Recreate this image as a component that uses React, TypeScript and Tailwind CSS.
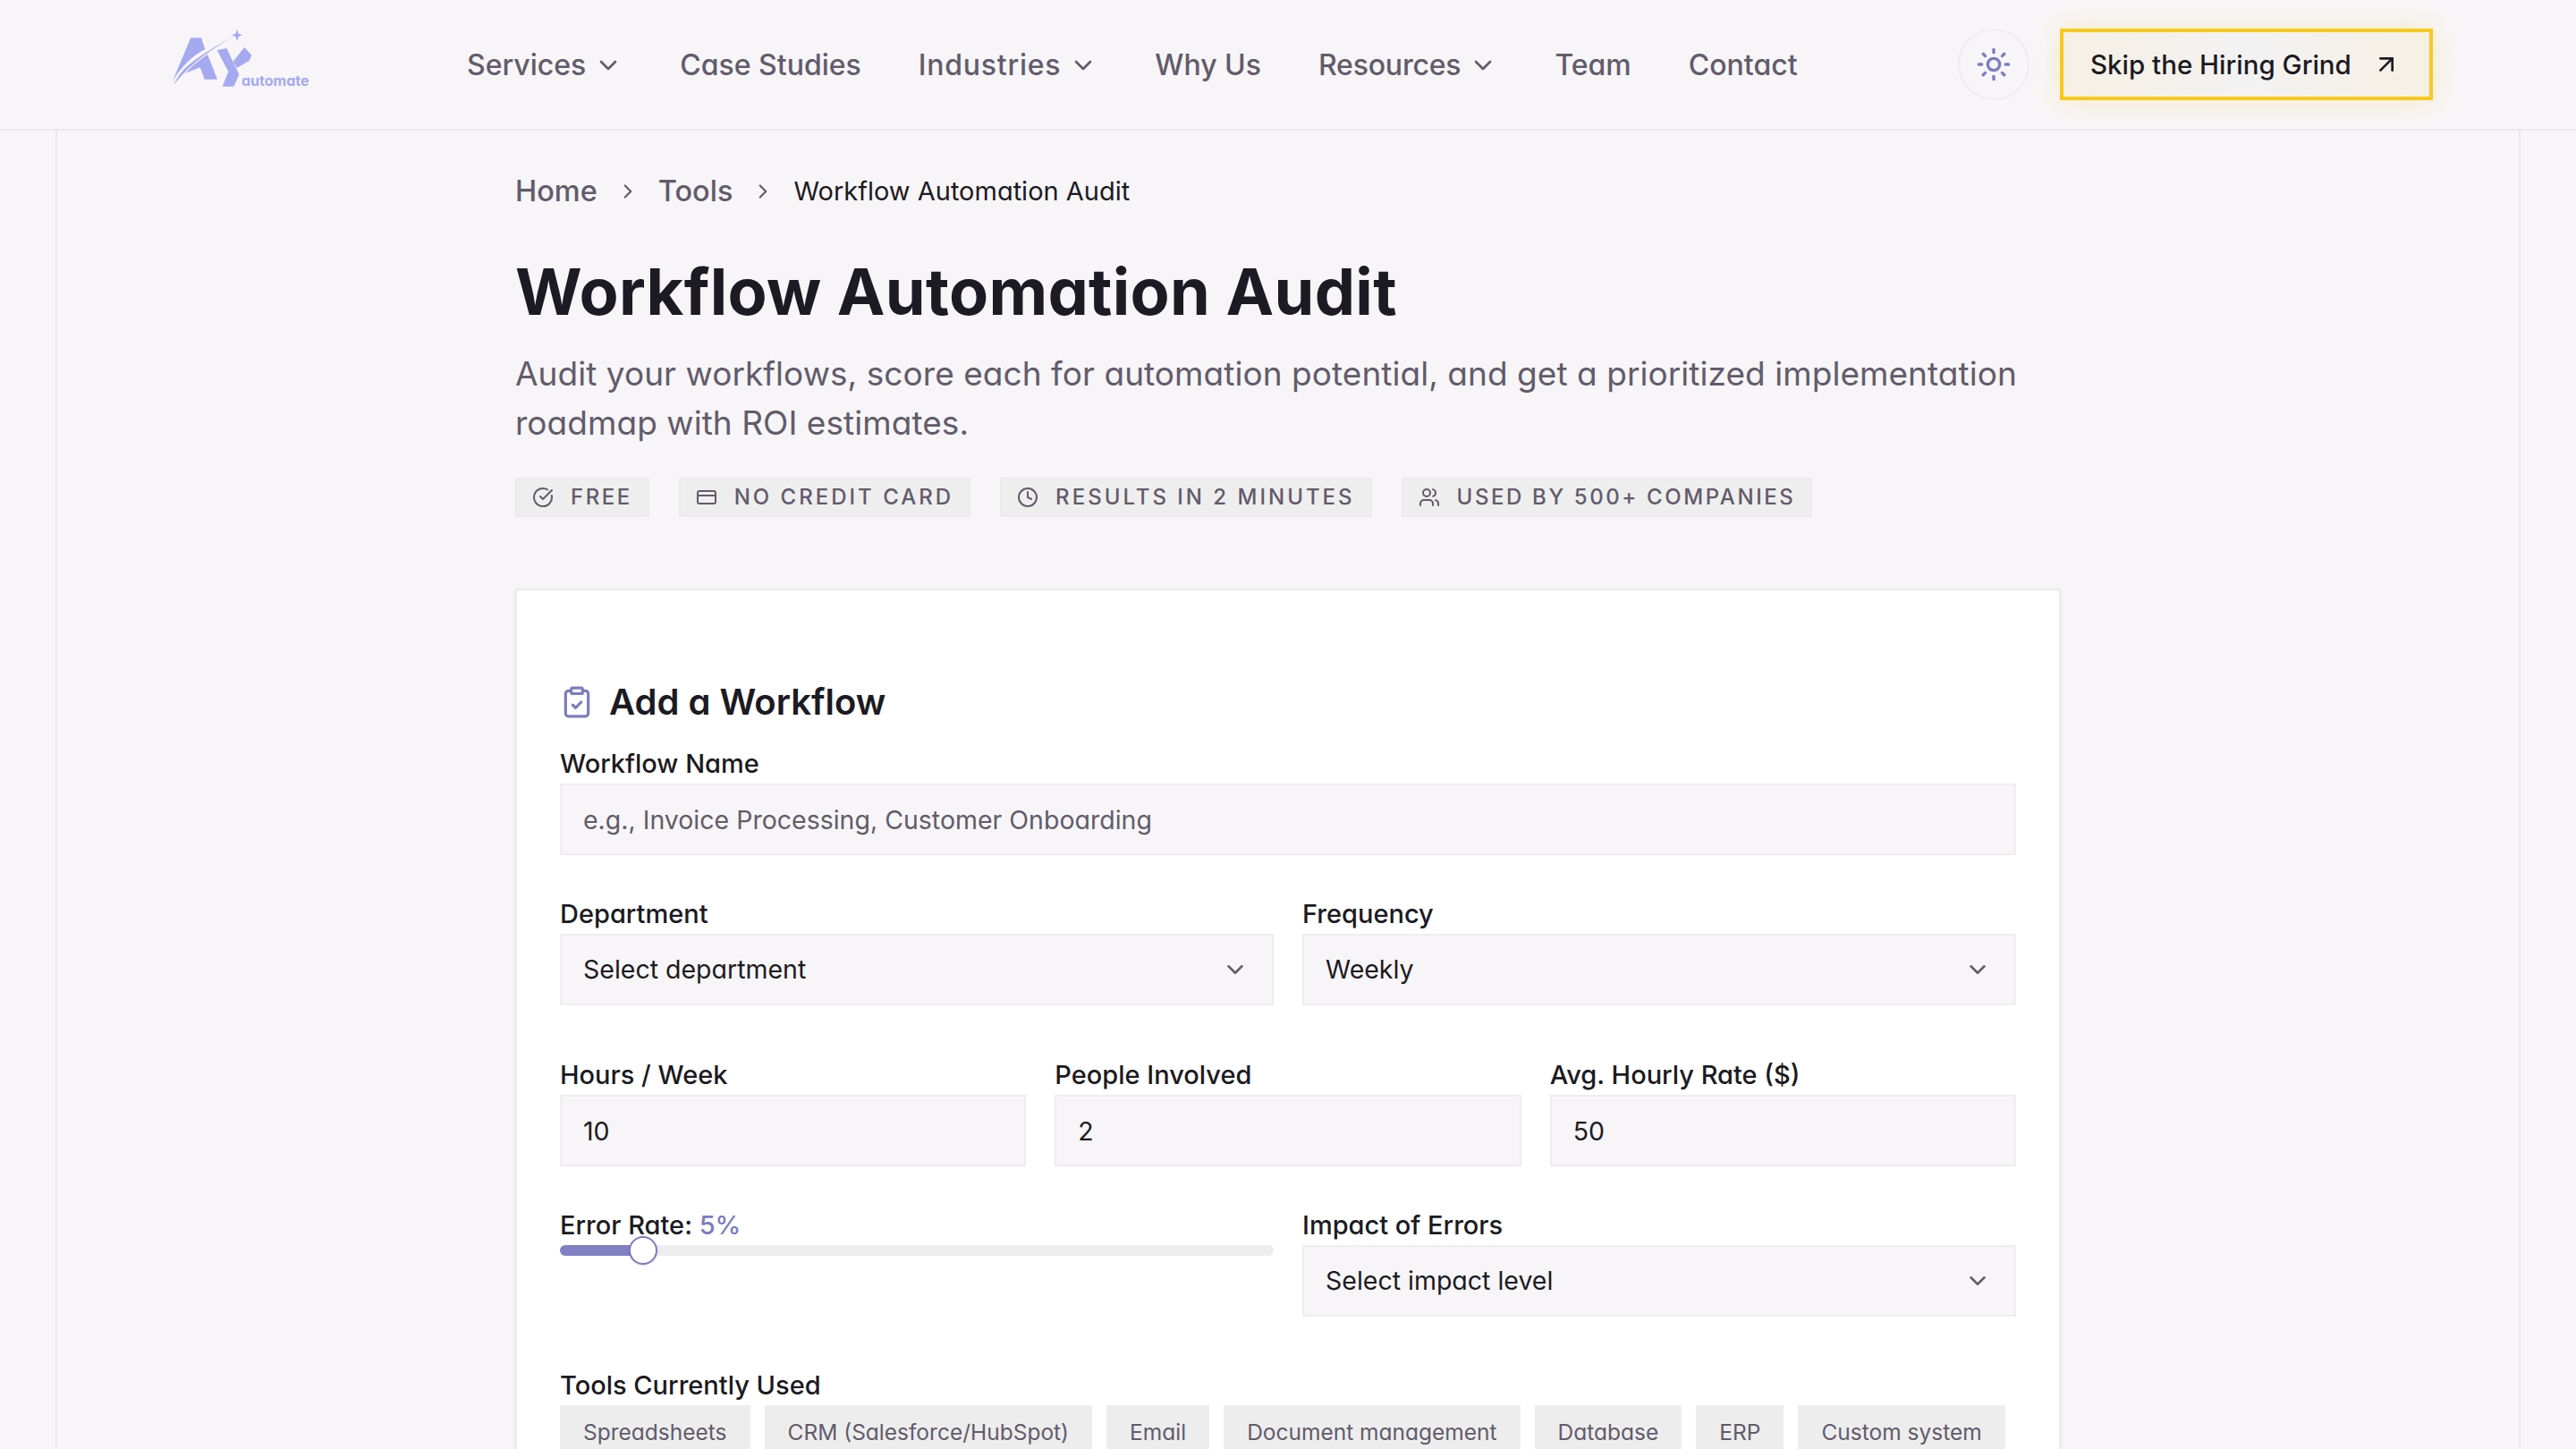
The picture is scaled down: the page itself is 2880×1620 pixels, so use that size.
import React from "react";
import { ChevronDown, ChevronRight, Sun, ArrowUpRight, CircleCheckBig, CreditCard, Clock, Users, ClipboardCheck } from "lucide-react";

function Logo() {
  return (
    <div className="relative h-[70px] w-[152px] shrink-0">
      <svg viewBox="66 36 270 196" className="absolute left-0 top-[-5px] h-[65.33px] w-[90px]" fill="#a5a9f0">
        <path d="M285 38 L290 53 L303 58 L290 63 L285 78 L280 63 L267 58 L280 53 Z" />
        <path d="M72 226 C110 175 175 115 276 62 C205 98 140 140 108 172 C92 188 80 208 72 226 Z" />
        <path d="M130 67 L165 67 L178 106 C135 126 95 168 68 214 Z" />
        <path d="M112 186 C134 160 158 142 186 122 L219 206 L176 206 L161 166 Z" />
        <path d="M218 108 L250 102 L292 190 L274 230 L236 230 L256 180 Z" />
        <path d="M310 98 L334 125 L326 143 L284 168 L272 146 Z" />
      </svg>
      <span className="absolute left-[78px] top-[43px] text-[16px] leading-[20px] font-bold text-[#a5a9f0]">automate</span>
    </div>
  );
}

function NavItem({ label, chevron, className = "" }: { label: string; chevron?: boolean; className?: string }) {
  return (
    <a className={`flex items-center gap-[9px] text-[32px] leading-[48px] font-medium text-[#625b6b] ${className}`}>
      <span>{label}</span>
      {chevron && <ChevronDown className="size-[32px]" strokeWidth={2} />}
    </a>
  );
}

function Badge({ icon, label, className = "" }: { icon: React.ReactNode; label: string; className?: string }) {
  return (
    <div className={`flex h-[44px] items-center gap-[19px] border-2 border-[#ebe9eb] bg-[#efeeef] px-[17px] text-[24px] font-medium uppercase text-[#625b6b] ${className}`}>
      {icon}
      <span>{label}</span>
    </div>
  );
}

function Label({ children }: { children: React.ReactNode }) {
  return <div className="h-[44px] text-[29px] leading-[44px] font-medium text-[#1c1a22]">{children}</div>;
}

function Select({ value }: { value: string }) {
  return (
    <div className="flex h-[80px] items-center justify-between border-2 border-[#efeeef] bg-[#f7f5f7] pl-[24px] pr-[26px] text-[28.5px] text-[#1c1a22]">
      <span>{value}</span>
      <ChevronDown className="size-[30px] text-[#625b6b]" strokeWidth={2} />
    </div>
  );
}

function TextInput({ value, placeholder }: { value?: string; placeholder?: string }) {
  return (
    <input
      readOnly
      value={value ?? ""}
      placeholder={placeholder}
      className="block h-[80px] w-full border-2 border-[#efeeef] bg-[#f7f5f7] px-[24px] text-[28.5px] text-[#1c1a22] outline-none placeholder:text-[#625b6b]"
    />
  );
}

const tools = ["Spreadsheets", "CRM (Salesforce/HubSpot)", "Email", "Document management", "Database", "ERP", "Custom system"];

export default function App() {
  return (
    <div className="h-[1620px] overflow-hidden bg-[#f7f5f7] [font-family:Inter,sans-serif] [font-feature-settings:'cv11']">
      <header className="flex h-[146px] items-center border-b-2 border-[#e9e7e9] pl-[192px] pr-[160px]">
        <Logo />
        <nav className="ml-[178px] mt-[2px] flex items-center gap-[64px]">
          <NavItem label="Services" chevron />
          <NavItem label="Case Studies" />
          <NavItem label="Industries" chevron className="tracking-[0.75px]" />
          <NavItem label="Why Us" />
          <NavItem label="Resources" chevron className="tracking-[-0.2px]" />
          <NavItem label="Team" />
          <NavItem label="Contact" />
        </nav>
        <div className="ml-auto flex items-center gap-[34px]">
          <button className="flex h-[80px] w-[80px] items-center justify-center rounded-full border-2 border-[#eeedee]">
            <Sun className="size-[40px] text-[#7c7cc0]" strokeWidth={2} />
          </button>
          <button className="flex h-[80px] w-[417px] items-center gap-[23px] border-4 border-[#f8c91a] bg-gradient-to-r from-[#f6f0e4] via-[#f3f2f3] to-[#f6f0e4] pl-[30px] text-[29.5px] font-medium text-[#1c1a22] shadow-[0_0_30px_rgba(248,201,26,0.22)]">
            <span>Skip the Hiring Grind</span>
            <ArrowUpRight className="size-[32px]" strokeWidth={2} />
          </button>
        </div>
      </header>

      <div className="mx-auto h-full w-[2756px] border-x-2 border-[#eae8ea]">
        <main className="mx-auto w-[1728px] pt-[44px]">
          <div className="flex h-[48px] items-center text-[32.5px] font-medium text-[#625b6b]">
            <span>Home</span>
            <ChevronRight className="mx-[21px] size-[26px]" strokeWidth={2} />
            <span>Tools</span>
            <ChevronRight className="mx-[21px] size-[26px]" strokeWidth={2} />
            <span className="text-[29px] font-normal text-[#1c1a22]">Workflow Automation Audit</span>
          </div>

          <h1 className="mt-[44px] text-[72px] leading-[88px] font-bold tracking-[0.3px] text-[#1c1a22]">Workflow Automation Audit</h1>

          <p className="mt-[20px] text-[37px] leading-[55px] tracking-[0.05px] text-[#625b6b]">
            Audit your workflows, score each for automation potential, and get a prioritized implementation roadmap with ROI estimates.
          </p>

          <div className="mt-[34px] flex gap-[33px]">
            <Badge icon={<CircleCheckBig className="size-[24px]" strokeWidth={2} />} label="Free" className="tracking-[2.5px]" />
            <Badge icon={<CreditCard className="size-[24px]" strokeWidth={2} />} label="No credit card" className="tracking-[3px]" />
            <Badge icon={<Clock className="size-[24px]" strokeWidth={2} />} label="Results in 2 minutes" className="tracking-[3px]" />
            <Badge icon={<Users className="size-[24px]" strokeWidth={2} />} label="Used by 500+ companies" className="tracking-[2.6px]" />
          </div>

          <section className="mt-[80px] border-2 border-[#eceaec] bg-white px-[48px] pt-[98px] pb-[100px] shadow-[0_2px_6px_rgba(0,0,0,0.05)]">
            <div className="flex h-[54px] items-center gap-[17px]">
              <ClipboardCheck className="size-[38px] text-[#7c7cc0]" strokeWidth={2} />
              <h2 className="text-[40px] leading-[54px] font-semibold text-[#1c1a22]">Add a Workflow</h2>
            </div>

            <div className="mt-[20px]">
              <Label>Workflow Name</Label>
              <TextInput placeholder="e.g., Invoice Processing, Customer Onboarding" />
            </div>

            <div className="mt-[44px] grid grid-cols-2 gap-[32px]">
              <div>
                <Label>Department</Label>
                <Select value="Select department" />
              </div>
              <div>
                <Label>Frequency</Label>
                <Select value="Weekly" />
              </div>
            </div>

            <div className="mt-[56px] grid grid-cols-3 gap-[32px]">
              <div>
                <Label>Hours / Week</Label>
                <TextInput value="10" />
              </div>
              <div>
                <Label>People Involved</Label>
                <TextInput value="2" />
              </div>
              <div>
                <Label>Avg. Hourly Rate ($)</Label>
                <TextInput value="50" />
              </div>
            </div>

            <div className="mt-[44px] grid grid-cols-2 gap-[32px]">
              <div>
                <Label>
                  Error Rate: <span className="text-[#7c7cc0]">5%</span>
                </Label>
                <div className="relative h-[12px] rounded-full bg-[#eeedee]">
                  <div className="h-full w-[92px] rounded-l-full bg-[#8080c4]" />
                  <div className="absolute left-[77px] top-[-10px] size-[32px] rounded-full border-2 border-[#7c7cc0] bg-white shadow-sm" />
                </div>
              </div>
              <div>
                <Label>Impact of Errors</Label>
                <Select value="Select impact level" />
              </div>
            </div>

            <div className="mt-[55px]">
              <Label>Tools Currently Used</Label>
              <div className="flex gap-[16px]">
                {tools.map((t) => (
                  <div key={t} className="flex h-[60px] items-center whitespace-nowrap bg-[#eeedee] px-[26px] text-[24.5px] text-[#625b6b]">
                    {t}
                  </div>
                ))}
              </div>
            </div>
          </section>
        </main>
      </div>
    </div>
  );
}
